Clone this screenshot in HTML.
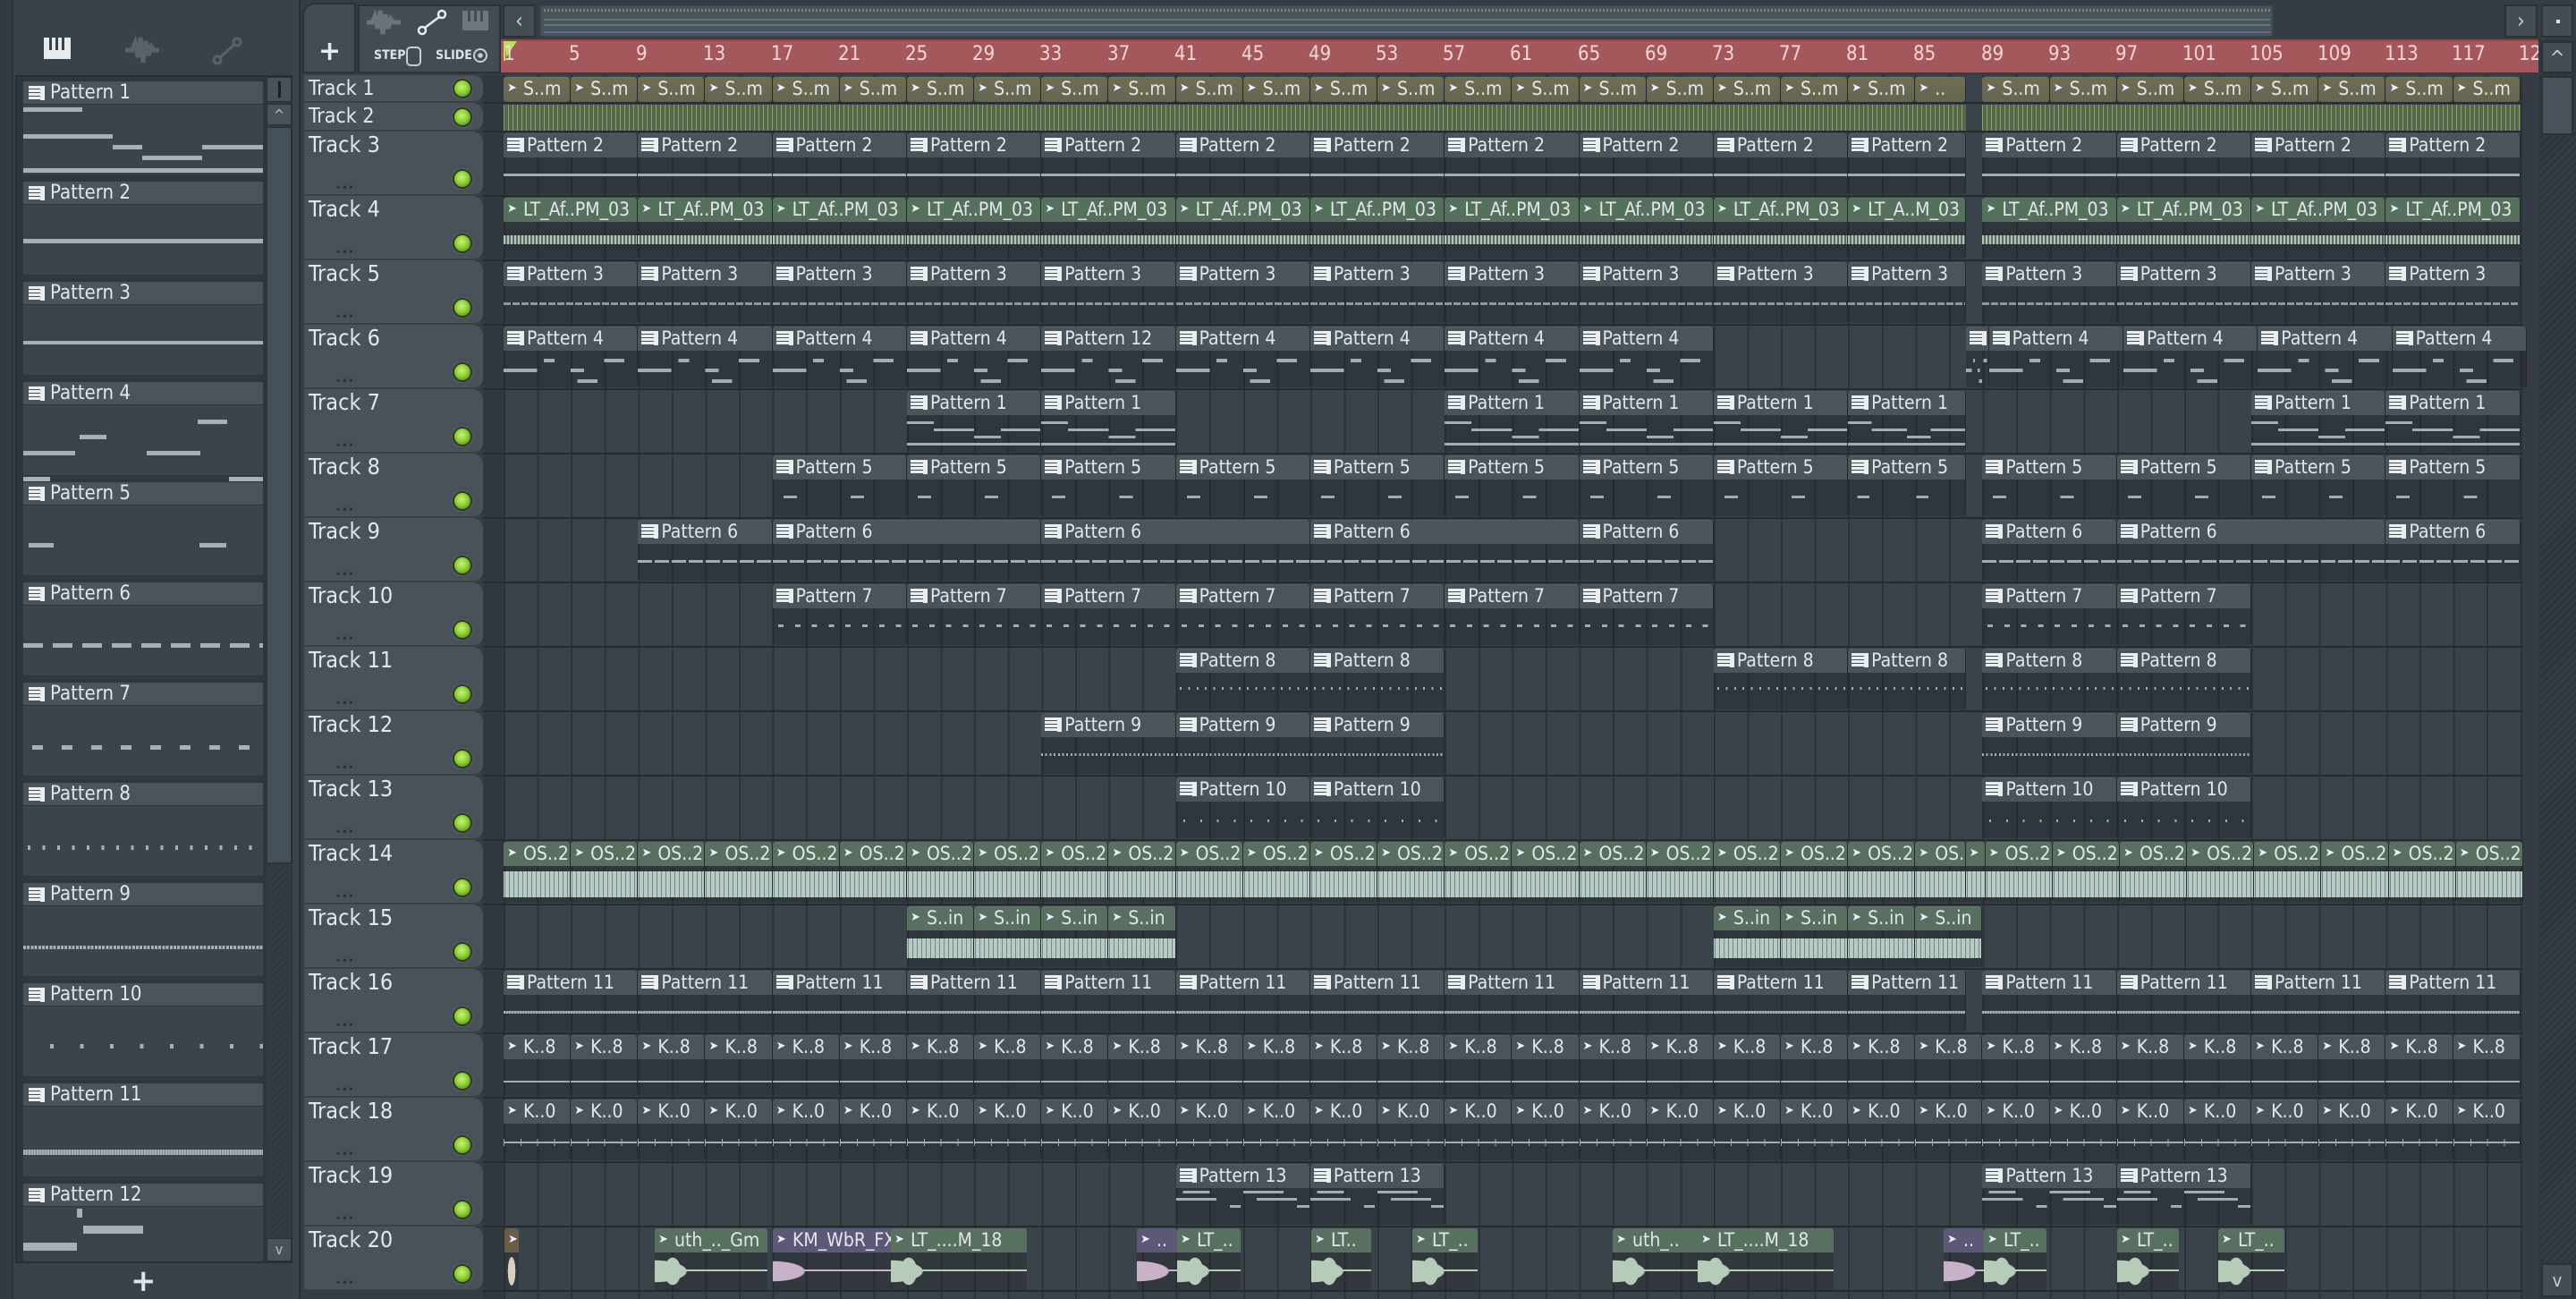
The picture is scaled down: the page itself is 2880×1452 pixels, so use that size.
<!DOCTYPE html>
<html><head><meta charset="utf-8"><style>
*{margin:0;padding:0;box-sizing:border-box}
body{width:2880px;height:1452px;background:#353c43;position:relative;overflow:hidden;font-family:"Liberation Sans Narrow","DejaVu Sans Condensed","Liberation Sans",sans-serif;color:#e2e7ea}
.a{position:absolute}
.lp{left:0;top:0;width:336px;height:1452px;background:#3a4249;border-right:2px solid #2a3035}
.lp .edge{left:0;top:0;width:15px;height:1452px;background:#333a40;border-right:2px solid #2b3136}
.plist{left:17px;top:84px;width:310px;height:1328px;background:#2f363c;border:2px solid #2a2f34;overflow:hidden}
.ph{position:absolute;left:7px;width:268px;height:25px;background:#4b535b;font-size:22px;line-height:25px;padding-left:30px;border-radius:2px}
.ph::before,.c.p::before{content:"";position:absolute;left:6px;top:5px;width:13px;height:16px;background:repeating-linear-gradient(#e8eef0 0 2px,#e8eef0 2px 3px,#4b535b 3px 4px);border-right:5px solid #e8eef0}
.c.p::before{width:14px;height:16px;left:4px;top:5px;border-right-width:5px}
.c.p{padding-left:26px}
.pb{position:absolute;left:7px;width:268px;height:78px;background:#3c444b}
.n{position:absolute;height:5px;background:#a7b0b6}
.th{left:340px;width:200px;background:#4a5259;border-radius:0 12px 12px 0;border-bottom:2px solid #3a4147;font-size:25px;padding-left:5px;line-height:30px}
.led{position:absolute;right:12px;width:22px;height:22px;border-radius:50%;background:radial-gradient(circle at 45% 40%,#c8f270 0,#8fd03a 45%,#5a9a1c 80%);border:2px solid #2b3a20;box-shadow:0 0 0 1px #5a6268}
.dots{position:absolute;left:35px;font-size:18px;color:#2b3136;letter-spacing:1px;font-weight:bold}
.gap{left:540px;top:84px;width:23px;height:1368px;background:#30373d}
.grid{left:563px;top:84px;width:2257px;height:1368px;background:repeating-linear-gradient(90deg,#2c3238 0 2px,transparent 2px 37.58px),#3b434a}
.rs{position:absolute;left:540px;width:2280px;height:2px;background:#262b30}
.tr{position:absolute;left:563px;height:68px;display:flex;width:2257px}
.tr>*{flex:none;height:100%}
.c{position:relative;border-radius:3px;overflow:hidden;white-space:nowrap;font-size:21px;line-height:26px;padding-left:22px;box-shadow:inset -1px 0 #252a2f,inset 0 1px rgba(255,255,255,.06)}
.c.p{background:linear-gradient(#4b535b 0 27px,rgba(28,32,37,.35) 27px)}
.c.au::before,.c.ol::before,.c.gr::before,.c.pu::before{content:"➤";position:absolute;left:4px;top:0;font-family:"DejaVu Sans",sans-serif;font-size:13px;color:#eef}
.ol{background:linear-gradient(#6e6d54,#666550)}
.gr{background:linear-gradient(#56705e 0 27px,rgba(28,32,37,.35) 27px)}
.au{background:linear-gradient(#4b535b 0 27px,rgba(28,32,37,.35) 27px)}
.pu{background:linear-gradient(#5e5878 0 27px,rgba(28,32,37,.35) 27px)}
.b1{width:18.79px}.b3{width:56.37px}.b4{width:75.16px}.b7{width:131.53px}.b8{width:150.32px}.b15{width:281.85px}.b16{width:300.64px}.b24{width:450.96px}.b32{width:601.28px}.b40{width:751.6px}.b87{width:1634.7px}
.e{background:none}
.x3 .c{background:linear-gradient(transparent 45px,#a3acb2 45px 48px,transparent 48px),linear-gradient(#4b535b 0 27px,rgba(28,32,37,.35) 27px)}
.x4 .c{background:repeating-linear-gradient(90deg,transparent 0 2px,rgba(40,48,45,.6) 2px 4px) 0 40px/100% 14px no-repeat,linear-gradient(transparent 42px,#b0c4b6 42px 52px,transparent 52px),linear-gradient(#56705e 0 27px,rgba(28,32,37,.35) 27px)}
.x5 .c{background:repeating-linear-gradient(90deg,#8d979d 0 8px,transparent 8px 10px) 0 45px/100% 3px no-repeat,linear-gradient(#4b535b 0 27px,rgba(28,32,37,.35) 27px)}
.x6 .c{background:linear-gradient(90deg,transparent 0 0%,#a3acb2 0 25%,transparent 25% 50%,#a3acb2 50% 60%,transparent 60%) 0 47px/100% 4px no-repeat,linear-gradient(90deg,transparent 0 30%,#a3acb2 30% 38%,transparent 38% 75%,#a3acb2 75% 90%,transparent 90%) 0 36px/100% 4px no-repeat,linear-gradient(90deg,transparent 0 55%,#a3acb2 55% 70%,transparent 70%) 0 59px/100% 4px no-repeat,linear-gradient(#4b535b 0 27px,rgba(28,32,37,.35) 27px)}
.x7 .c{background:linear-gradient(90deg,#a3acb2 0 20%,transparent 20%) 0 34px/100% 3px no-repeat,linear-gradient(90deg,transparent 0 20%,#a3acb2 20% 50%,transparent 50% 70%,#a3acb2 70%) 0 42px/100% 3px no-repeat,linear-gradient(90deg,transparent 0 50%,#a3acb2 50% 70%,transparent 70%) 0 50px/100% 3px no-repeat,linear-gradient(#a3acb2,#a3acb2) 0 58px/100% 3px no-repeat,linear-gradient(#4b535b 0 27px,rgba(28,32,37,.35) 27px)}
.x8 .c{background:linear-gradient(90deg,transparent 0 8%,#a3acb2 8% 18%,transparent 18% 58%,#a3acb2 58% 68%,transparent 68%) 0 45px/100% 3px no-repeat,linear-gradient(#4b535b 0 27px,rgba(28,32,37,.35) 27px)}
.x9 .c{background:repeating-linear-gradient(90deg,#a3acb2 0 16px,transparent 16px 19px) 0 45px/100% 3px no-repeat,linear-gradient(#4b535b 0 27px,rgba(28,32,37,.35) 27px)}
.x10 .c{background:repeating-linear-gradient(90deg,transparent 0 6px,#a3acb2 6px 12px,transparent 12px 18.8px) 0 45px/100% 3px no-repeat,linear-gradient(#4b535b 0 27px,rgba(28,32,37,.35) 27px)}
.x11 .c{background:repeating-linear-gradient(90deg,transparent 0 4px,#a3acb2 4px 6px,transparent 6px 9.4px) 0 43px/100% 3px no-repeat,linear-gradient(#4b535b 0 27px,rgba(28,32,37,.35) 27px)}
.x12 .c{background:repeating-linear-gradient(90deg,#a3acb2 0 2px,transparent 2px 4.7px) 0 45px/100% 3px no-repeat,linear-gradient(#4b535b 0 27px,rgba(28,32,37,.35) 27px)}
.x13 .c{background:repeating-linear-gradient(90deg,transparent 0 8px,#a3acb2 8px 10px,transparent 10px 18.8px) 0 47px/100% 3px no-repeat,linear-gradient(#4b535b 0 27px,rgba(28,32,37,.35) 27px)}
.x14 .c{background:repeating-linear-gradient(90deg,transparent 0 1px,rgba(40,50,50,.45) 1px 2px,transparent 2px 5px) 0 30px/100% 36px no-repeat,linear-gradient(transparent 33px,#b6cbc5 33px 62px,transparent 62px),linear-gradient(#57705f 0 27px,rgba(28,32,37,.35) 27px)}
.x15 .c{background:repeating-linear-gradient(90deg,transparent 0 1px,rgba(40,50,50,.45) 1px 2px,transparent 2px 5px) 0 30px/100% 38px no-repeat,linear-gradient(transparent 36px,#b6cbc5 36px 58px,transparent 58px),linear-gradient(#57705f 0 27px,rgba(28,32,37,.35) 27px)}
.x16 .c{background:repeating-linear-gradient(90deg,#a3acb2 0 2px,#7f888e 2px 3px) 0 45px/100% 3px no-repeat,linear-gradient(#4b535b 0 27px,rgba(28,32,37,.35) 27px)}
.x17 .c{background:linear-gradient(transparent 51px,#a3acb2 51px 53px,transparent 53px),linear-gradient(#4b535b 0 27px,rgba(28,32,37,.35) 27px)}
.x18 .c{background:repeating-linear-gradient(90deg,#a3acb2 0 1px,transparent 1px 18.8px) 0 44px/100% 8px no-repeat,linear-gradient(transparent 47px,#a3acb2 47px 49px,transparent 49px),linear-gradient(#4b535b 0 27px,rgba(28,32,37,.35) 27px)}
.x19 .c{background:linear-gradient(90deg,transparent 0 5%,#a3acb2 5% 25%,transparent 25% 50%,#a3acb2 50% 80%,transparent 80%) 0 30px/100% 3px no-repeat,linear-gradient(90deg,#a3acb2 0 30%,transparent 30% 60%,#a3acb2 60% 90%,transparent 90%) 0 38px/100% 3px no-repeat,linear-gradient(90deg,transparent 0 40%,#a3acb2 40% 48%,transparent 48% 90%,#a3acb2 90%) 0 46px/100% 3px no-repeat,linear-gradient(#4b535b 0 27px,rgba(28,32,37,.35) 27px)}
.w20{position:absolute;top:1373px;height:70px;border-radius:3px;overflow:hidden;font-size:21px;line-height:26px;padding-left:22px;white-space:nowrap}
.w20::before{content:"➤";position:absolute;left:4px;top:0;font-family:"DejaVu Sans",sans-serif;font-size:13px;color:#eef}
.g20{background:radial-gradient(ellipse 70px 24px at 0px 48px,#b6ccb8 50%,transparent 52%),radial-gradient(ellipse 18px 30px at 20px 48px,#b6ccb8 50%,transparent 52%),linear-gradient(transparent 46px,#b6ccb8 46px 48px,transparent 48px),linear-gradient(#57705f 0 27px,rgba(28,32,37,.3) 27px)}
.p20{background:radial-gradient(ellipse 70px 22px at 0px 48px,#c9b2c9 50%,transparent 52%),linear-gradient(transparent 46px,#c9b2c9 46px 48px,transparent 48px),linear-gradient(#5e5878 0 27px,rgba(28,32,37,.3) 27px)}
.rl{position:absolute;top:48px;font-size:22px;color:#f6d6d6}
</style></head><body>

<!-- LEFT PANEL -->
<div class="a lp">
 <div class="a edge"></div>
 <div class="a" style="left:49px;top:42px;width:30px;height:24px;background:#e6ecee"></div>
 <div class="a" style="left:55px;top:42px;width:3px;height:14px;background:#3a4249"></div>
 <div class="a" style="left:62px;top:42px;width:3px;height:14px;background:#3a4249"></div>
 <div class="a" style="left:69px;top:42px;width:3px;height:14px;background:#3a4249"></div>
 <svg class="a" style="left:138px;top:38px" width="42" height="36"><path d="M2 18 L10 18 L13 10 L16 26 L19 4 L22 32 L25 8 L28 24 L31 14 L34 18 L40 18" stroke="#59626a" stroke-width="5" fill="none"/></svg>
 <svg class="a" style="left:236px;top:40px" width="36" height="34"><circle cx="7" cy="27" r="4" stroke="#59626a" stroke-width="3" fill="none"/><circle cx="29" cy="7" r="4" stroke="#59626a" stroke-width="3" fill="none"/><path d="M10 24 L26 10" stroke="#59626a" stroke-width="3"/></svg>
 <div class="a plist">
  <div class="ph" style="top:5px">Pattern 1</div>
  <div class="pb" style="top:31px">
   <div class="n" style="left:0;top:3px;width:66px"></div><div class="n" style="left:0;top:33px;width:100px"></div><div class="n" style="left:100px;top:45px;width:33px"></div><div class="n" style="left:200px;top:45px;width:68px"></div><div class="n" style="left:133px;top:57px;width:67px"></div><div class="n" style="left:0;top:71px;width:268px"></div></div>
  <div class="ph" style="top:117px">Pattern 2</div>
  <div class="pb" style="top:143px"><div class="n" style="left:0;top:38px;width:268px"></div></div>
  <div class="ph" style="top:229px">Pattern 3</div>
  <div class="pb" style="top:255px"><div class="n" style="left:0;top:40px;width:268px;height:4px"></div></div>
  <div class="ph" style="top:341px">Pattern 4</div>
  <div class="pb" style="top:367px"><div class="n" style="left:195px;top:16px;width:33px"></div><div class="n" style="left:63px;top:33px;width:30px"></div><div class="n" style="left:0;top:51px;width:58px"></div><div class="n" style="left:138px;top:51px;width:60px"></div><div class="n" style="left:0;top:80px;width:30px"></div><div class="n" style="left:230px;top:80px;width:38px"></div></div>
  <div class="ph" style="top:453px">Pattern 5</div>
  <div class="pb" style="top:479px"><div class="n" style="left:6px;top:42px;width:28px"></div><div class="n" style="left:197px;top:42px;width:30px"></div></div>
  <div class="ph" style="top:565px">Pattern 6</div>
  <div class="pb" style="top:591px"><div class="n" style="left:0;top:42px;width:268px;background:repeating-linear-gradient(90deg,#a7b0b6 0 22px,transparent 22px 33px)"></div></div>
  <div class="ph" style="top:677px">Pattern 7</div>
  <div class="pb" style="top:703px"><div class="n" style="left:10px;top:44px;width:258px;background:repeating-linear-gradient(90deg,#a7b0b6 0 12px,transparent 12px 33px)"></div></div>
  <div class="ph" style="top:789px">Pattern 8</div>
  <div class="pb" style="top:815px"><div class="n" style="left:5px;top:44px;width:263px;background:repeating-linear-gradient(90deg,#a7b0b6 0 3px,transparent 3px 16.5px)"></div></div>
  <div class="ph" style="top:901px">Pattern 9</div>
  <div class="pb" style="top:927px"><div class="n" style="left:0;top:44px;width:268px;height:4px;background:repeating-linear-gradient(90deg,#a7b0b6 0 3px,transparent 3px 4.2px)"></div></div>
  <div class="ph" style="top:1013px">Pattern 10</div>
  <div class="pb" style="top:1039px"><div class="n" style="left:30px;top:42px;width:238px;background:repeating-linear-gradient(90deg,#a7b0b6 0 4px,transparent 4px 33.5px)"></div></div>
  <div class="ph" style="top:1125px">Pattern 11</div>
  <div class="pb" style="top:1151px"><div class="n" style="left:0;top:48px;width:268px;height:6px;background:repeating-linear-gradient(90deg,#a7b0b6 0 2px,#7f888e 2px 3px)"></div></div>
  <div class="ph" style="top:1237px">Pattern 12</div>
  <div class="pb" style="top:1263px"><div class="n" style="left:60px;top:2px;width:6px;height:10px"></div><div class="n" style="left:67px;top:21px;width:67px;height:9px"></div><div class="n" style="left:0;top:40px;width:60px;height:9px"></div></div>
 </div>
 <div class="a" style="left:298px;top:86px;width:28px;height:1324px;background:repeating-linear-gradient(135deg,#30373d 0 3px,#343b41 3px 6px)"></div>
 <div class="a" style="left:298px;top:86px;width:28px;height:28px;background:#4a5259;border:1px solid #2a3035"><div class="a" style="left:12px;top:4px;width:3px;height:18px;background:#1c2024"></div></div>
 <div class="a" style="left:298px;top:116px;width:28px;height:24px;background:#4a5259;border:1px solid #2a3035;font-size:16px;text-align:center;line-height:24px;color:#bbb">^</div>
 <div class="a" style="left:298px;top:142px;width:28px;height:823px;background:#465058;border:1px solid #2a3035"></div>
 <div class="a" style="left:298px;top:1384px;width:28px;height:26px;background:#4a5259;border:1px solid #2a3035;font-size:16px;text-align:center;line-height:24px;color:#bbb">v</div>
 <div class="a" style="left:146px;top:1412px;font-size:34px;color:#dfe4e6;font-family:'DejaVu Sans',sans-serif;font-weight:bold">+</div>
</div>

<!-- TOP TOOLBAR -->
<div class="a" style="left:338px;top:3px;width:60px;height:79px;background:#444c53;border-radius:14px 0 0 0;border:2px solid #2b3136"></div>
<div class="a" style="left:356px;top:40px;font-size:30px;font-family:'DejaVu Sans',sans-serif;font-weight:bold;color:#e6ebed">+</div>
<div class="a" style="left:400px;top:5px;width:160px;height:77px;background:#444c53;border:2px solid #2b3136"></div>
<svg class="a" style="left:408px;top:10px" width="44" height="30"><path d="M2 15 L8 15 L11 8 L14 22 L17 2 L20 28 L23 6 L26 22 L29 11 L32 15 L40 15" stroke="#6a737a" stroke-width="5" fill="none"/></svg>
<svg class="a" style="left:466px;top:10px" width="34" height="30"><circle cx="6" cy="24" r="4" stroke="#e6ebed" stroke-width="2.5" fill="none"/><circle cx="28" cy="6" r="4" stroke="#e6ebed" stroke-width="2.5" fill="none"/><path d="M9 21 L25 9" stroke="#e6ebed" stroke-width="2.5"/></svg>
<div class="a" style="left:517px;top:12px;width:29px;height:22px;background:#6d767c"></div>
<div class="a" style="left:523px;top:12px;width:3px;height:12px;background:#444c53"></div><div class="a" style="left:530px;top:12px;width:3px;height:12px;background:#444c53"></div><div class="a" style="left:537px;top:12px;width:3px;height:12px;background:#444c53"></div>
<div class="a" style="left:418px;top:54px;font-size:14px;font-weight:bold;color:#dde2e5">STEP</div>
<div class="a" style="left:454px;top:52px;width:17px;height:22px;border:2px solid #c8ced2;border-radius:5px"></div>
<div class="a" style="left:487px;top:54px;font-size:14px;font-weight:bold;color:#dde2e5">SLIDE</div>
<div class="a" style="left:529px;top:54px;width:16px;height:16px;border:2px solid #c8ced2;border-radius:50%;background:radial-gradient(#c8ced2 30%,transparent 35%)"></div>
<div class="a" style="left:562px;top:5px;width:37px;height:37px;background:#454d54;border:2px solid #2b3136;font-size:24px;line-height:32px;text-align:center;color:#ccd">&lsaquo;</div>
<div class="a" style="left:603px;top:5px;width:1939px;height:37px;background:#49535b;border:2px solid #3a434a"></div>
<div class="a" style="left:608px;top:10px;width:1930px;height:3px;background:repeating-linear-gradient(90deg,#7d8570 0 2px,transparent 2px 4px)"></div>
<div class="a" style="left:608px;top:21px;width:1930px;height:2px;background:#5e7a6c"></div>
<div class="a" style="left:608px;top:27px;width:1930px;height:2px;background:#6b747b"></div>
<div class="a" style="left:608px;top:35px;width:1930px;height:2px;background:#5b6a9a"></div>
<div class="a" style="left:2800px;top:5px;width:37px;height:37px;background:#454d54;border:2px solid #2b3136;font-size:24px;line-height:32px;text-align:center;color:#ccd">&rsaquo;</div>
<div class="a" style="left:2841px;top:5px;width:36px;height:37px;background:#454d54;border:2px solid #2b3136"><div class="a" style="left:15px;top:15px;width:4px;height:4px;background:#dde"></div></div>

<!-- RULER -->
<div class="a" style="left:560px;top:44px;width:2278px;height:37px;background:#a4585c;border-top:2px solid #8c4a4e"></div>
<svg class="a" style="left:562px;top:46px" width="18" height="24"><path d="M2 0 L16 0 L4 18 Z" fill="#b4e25a"/><path d="M2 0 L2 22" stroke="#b4e25a" stroke-width="2"/></svg>
<div class="rl" style="left:563px">1</div><div class="rl" style="left:636px">5</div><div class="rl" style="left:711px">9</div><div class="rl" style="left:786px">13</div><div class="rl" style="left:862px">17</div><div class="rl" style="left:937px">21</div><div class="rl" style="left:1012px">25</div><div class="rl" style="left:1087px">29</div><div class="rl" style="left:1162px">33</div><div class="rl" style="left:1238px">37</div><div class="rl" style="left:1313px">41</div><div class="rl" style="left:1388px">45</div><div class="rl" style="left:1463px">49</div><div class="rl" style="left:1538px">53</div><div class="rl" style="left:1613px">57</div><div class="rl" style="left:1688px">61</div><div class="rl" style="left:1764px">65</div><div class="rl" style="left:1839px">69</div><div class="rl" style="left:1914px">73</div><div class="rl" style="left:1989px">77</div><div class="rl" style="left:2064px">81</div><div class="rl" style="left:2139px">85</div><div class="rl" style="left:2215px">89</div><div class="rl" style="left:2290px">93</div><div class="rl" style="left:2365px">97</div><div class="rl" style="left:2440px">101</div><div class="rl" style="left:2515px">105</div><div class="rl" style="left:2591px">109</div><div class="rl" style="left:2666px">113</div><div class="rl" style="left:2741px">117</div><div class="a" style="left:2816px;top:48px;width:22px;overflow:hidden;font-size:22px;color:#f6d6d6">121</div>

<!-- RIGHT SCROLLBAR -->
<div class="a" style="left:2838px;top:44px;width:42px;height:1408px;background:repeating-linear-gradient(135deg,#2e353b 0 3px,#343b41 3px 6px)"></div>
<div class="a" style="left:2841px;top:46px;width:36px;height:36px;background:#454d54;border:2px solid #2b3136;font-size:22px;text-align:center;line-height:36px;color:#ccd">^</div>
<div class="a" style="left:2841px;top:85px;width:36px;height:66px;background:#49525a;border:2px solid #2b3136"></div>
<div class="a" style="left:2841px;top:1412px;width:36px;height:38px;background:#454d54;border:2px solid #2b3136;font-size:20px;text-align:center;line-height:34px;color:#ccd">v</div>

<!-- TRACK HEADERS -->
<div class="a gap"></div>
<div class="a th" style="top:84px;height:31px;line-height:30px;font-size:23px">Track 1<div class="led" style="top:4px"></div></div>
<div class="a th" style="top:115px;height:32px;line-height:30px;font-size:23px">Track 2<div class="led" style="top:5px"></div></div>
<div class="a th" style="top:147px;height:72px">Track 3<div class="led" style="top:42px"></div><div class="dots" style="top:44px">...</div></div>
<div class="a th" style="top:219px;height:72px">Track 4<div class="led" style="top:42px"></div><div class="dots" style="top:44px">...</div></div>
<div class="a th" style="top:291px;height:72px">Track 5<div class="led" style="top:42px"></div><div class="dots" style="top:44px">...</div></div>
<div class="a th" style="top:363px;height:72px">Track 6<div class="led" style="top:42px"></div><div class="dots" style="top:44px">...</div></div>
<div class="a th" style="top:435px;height:72px">Track 7<div class="led" style="top:42px"></div><div class="dots" style="top:44px">...</div></div>
<div class="a th" style="top:507px;height:72px">Track 8<div class="led" style="top:42px"></div><div class="dots" style="top:44px">...</div></div>
<div class="a th" style="top:579px;height:72px">Track 9<div class="led" style="top:42px"></div><div class="dots" style="top:44px">...</div></div>
<div class="a th" style="top:651px;height:72px">Track 10<div class="led" style="top:42px"></div><div class="dots" style="top:44px">...</div></div>
<div class="a th" style="top:723px;height:72px">Track 11<div class="led" style="top:42px"></div><div class="dots" style="top:44px">...</div></div>
<div class="a th" style="top:795px;height:72px">Track 12<div class="led" style="top:42px"></div><div class="dots" style="top:44px">...</div></div>
<div class="a th" style="top:867px;height:72px">Track 13<div class="led" style="top:42px"></div><div class="dots" style="top:44px">...</div></div>
<div class="a th" style="top:939px;height:72px">Track 14<div class="led" style="top:42px"></div><div class="dots" style="top:44px">...</div></div>
<div class="a th" style="top:1011px;height:72px">Track 15<div class="led" style="top:42px"></div><div class="dots" style="top:44px">...</div></div>
<div class="a th" style="top:1083px;height:72px">Track 16<div class="led" style="top:42px"></div><div class="dots" style="top:44px">...</div></div>
<div class="a th" style="top:1155px;height:72px">Track 17<div class="led" style="top:42px"></div><div class="dots" style="top:44px">...</div></div>
<div class="a th" style="top:1227px;height:72px">Track 18<div class="led" style="top:42px"></div><div class="dots" style="top:44px">...</div></div>
<div class="a th" style="top:1299px;height:72px">Track 19<div class="led" style="top:42px"></div><div class="dots" style="top:44px">...</div></div>
<div class="a th" style="top:1371px;height:72px">Track 20<div class="led" style="top:42px"></div><div class="dots" style="top:44px">...</div></div>

<!-- GRID -->
<div class="a grid"></div>
<div class="rs" style="top:114px"></div><div class="rs" style="top:146px"></div><div class="rs" style="top:218px"></div><div class="rs" style="top:290px"></div><div class="rs" style="top:362px"></div><div class="rs" style="top:434px"></div><div class="rs" style="top:506px"></div><div class="rs" style="top:578px"></div><div class="rs" style="top:650px"></div><div class="rs" style="top:722px"></div><div class="rs" style="top:794px"></div><div class="rs" style="top:866px"></div><div class="rs" style="top:938px"></div><div class="rs" style="top:1010px"></div><div class="rs" style="top:1082px"></div><div class="rs" style="top:1154px"></div><div class="rs" style="top:1226px"></div><div class="rs" style="top:1298px"></div><div class="rs" style="top:1370px"></div><div class="rs" style="top:1442px"></div>

<!-- T1 -->
<div class="tr" style="top:86px;height:28px">
<div class="c ol b4">S..m</div><div class="c ol b4">S..m</div><div class="c ol b4">S..m</div><div class="c ol b4">S..m</div><div class="c ol b4">S..m</div><div class="c ol b4">S..m</div><div class="c ol b4">S..m</div><div class="c ol b4">S..m</div><div class="c ol b4">S..m</div><div class="c ol b4">S..m</div><div class="c ol b4">S..m</div><div class="c ol b4">S..m</div><div class="c ol b4">S..m</div><div class="c ol b4">S..m</div><div class="c ol b4">S..m</div><div class="c ol b4">S..m</div><div class="c ol b4">S..m</div><div class="c ol b4">S..m</div><div class="c ol b4">S..m</div><div class="c ol b4">S..m</div><div class="c ol b4">S..m</div><div class="c ol b3">..</div><i class="e b1"></i><div class="c ol b4">S..m</div><div class="c ol b4">S..m</div><div class="c ol b4">S..m</div><div class="c ol b4">S..m</div><div class="c ol b4">S..m</div><div class="c ol b4">S..m</div><div class="c ol b4">S..m</div><div class="c ol b4">S..m</div>
</div>
<!-- T2 -->
<div class="tr" style="top:117px;height:29px">
<div class="b87" style="background:repeating-linear-gradient(90deg,#8aa070 0 1px,#56684a 1px 5px)"></div><i class="e b1"></i><div class="b32" style="background:repeating-linear-gradient(90deg,#8aa070 0 1px,#56684a 1px 5px)"></div>
</div>
<!-- T3 -->
<div class="tr x3" style="top:149px"><div class="c p b8">Pattern 2</div><div class="c p b8">Pattern 2</div><div class="c p b8">Pattern 2</div><div class="c p b8">Pattern 2</div><div class="c p b8">Pattern 2</div><div class="c p b8">Pattern 2</div><div class="c p b8">Pattern 2</div><div class="c p b8">Pattern 2</div><div class="c p b8">Pattern 2</div><div class="c p b8">Pattern 2</div><div class="c p b7">Pattern 2</div><i class="e b1"></i><div class="c p b8">Pattern 2</div><div class="c p b8">Pattern 2</div><div class="c p b8">Pattern 2</div><div class="c p b8">Pattern 2</div></div>
<!-- T4 -->
<div class="tr x4" style="top:221px"><div class="c gr b8">LT_Af..PM_03</div><div class="c gr b8">LT_Af..PM_03</div><div class="c gr b8">LT_Af..PM_03</div><div class="c gr b8">LT_Af..PM_03</div><div class="c gr b8">LT_Af..PM_03</div><div class="c gr b8">LT_Af..PM_03</div><div class="c gr b8">LT_Af..PM_03</div><div class="c gr b8">LT_Af..PM_03</div><div class="c gr b8">LT_Af..PM_03</div><div class="c gr b8">LT_Af..PM_03</div><div class="c gr b7">LT_A..M_03</div><i class="e b1"></i><div class="c gr b8">LT_Af..PM_03</div><div class="c gr b8">LT_Af..PM_03</div><div class="c gr b8">LT_Af..PM_03</div><div class="c gr b8">LT_Af..PM_03</div></div>
<!-- T5 -->
<div class="tr x5" style="top:293px"><div class="c p b8">Pattern 3</div><div class="c p b8">Pattern 3</div><div class="c p b8">Pattern 3</div><div class="c p b8">Pattern 3</div><div class="c p b8">Pattern 3</div><div class="c p b8">Pattern 3</div><div class="c p b8">Pattern 3</div><div class="c p b8">Pattern 3</div><div class="c p b8">Pattern 3</div><div class="c p b8">Pattern 3</div><div class="c p b7">Pattern 3</div><i class="e b1"></i><div class="c p b8">Pattern 3</div><div class="c p b8">Pattern 3</div><div class="c p b8">Pattern 3</div><div class="c p b8">Pattern 3</div></div>
<!-- T6 -->
<div class="tr x6" style="top:365px"><div class="c p b8">Pattern 4</div><div class="c p b8">Pattern 4</div><div class="c p b8">Pattern 4</div><div class="c p b8">Pattern 4</div><div class="c p b8">Pattern 12</div><div class="c p b8">Pattern 4</div><div class="c p b8">Pattern 4</div><div class="c p b8">Pattern 4</div><div class="c p b8">Pattern 4</div><i class="e b15"></i><div class="c p b1"></div><div class="c p b8">Pattern 4</div><div class="c p b8">Pattern 4</div><div class="c p b8">Pattern 4</div><div class="c p b8">Pattern 4</div></div>
<!-- T7 -->
<div class="tr x7" style="top:437px"><i class="e b24"></i><div class="c p b8">Pattern 1</div><div class="c p b8">Pattern 1</div><i class="e b16"></i><div class="c p b8">Pattern 1</div><div class="c p b8">Pattern 1</div><div class="c p b8">Pattern 1</div><div class="c p b7">Pattern 1</div><i class="e b1"></i><i class="e b16"></i><div class="c p b8">Pattern 1</div><div class="c p b8">Pattern 1</div></div>
<!-- T8 -->
<div class="tr x8" style="top:509px"><i class="e b16"></i><div class="c p b8">Pattern 5</div><div class="c p b8">Pattern 5</div><div class="c p b8">Pattern 5</div><div class="c p b8">Pattern 5</div><div class="c p b8">Pattern 5</div><div class="c p b8">Pattern 5</div><div class="c p b8">Pattern 5</div><div class="c p b8">Pattern 5</div><div class="c p b7">Pattern 5</div><i class="e b1"></i><div class="c p b8">Pattern 5</div><div class="c p b8">Pattern 5</div><div class="c p b8">Pattern 5</div><div class="c p b8">Pattern 5</div></div>
<!-- T9 -->
<div class="tr x9" style="top:581px"><i class="e b8"></i><div class="c p b8">Pattern 6</div><div class="c p b16">Pattern 6</div><div class="c p b16">Pattern 6</div><div class="c p b16">Pattern 6</div><div class="c p b8">Pattern 6</div><i class="e b16"></i><div class="c p b8">Pattern 6</div><div class="c p b16">Pattern 6</div><div class="c p b8">Pattern 6</div></div>
<!-- T10 -->
<div class="tr x10" style="top:653px"><i class="e b16"></i><div class="c p b8">Pattern 7</div><div class="c p b8">Pattern 7</div><div class="c p b8">Pattern 7</div><div class="c p b8">Pattern 7</div><div class="c p b8">Pattern 7</div><div class="c p b8">Pattern 7</div><div class="c p b8">Pattern 7</div><i class="e b16"></i><div class="c p b8">Pattern 7</div><div class="c p b8">Pattern 7</div></div>
<!-- T11 -->
<div class="tr x11" style="top:725px"><i class="e b40"></i><div class="c p b8">Pattern 8</div><div class="c p b8">Pattern 8</div><i class="e b16"></i><div class="c p b8">Pattern 8</div><div class="c p b7">Pattern 8</div><i class="e b1"></i><div class="c p b8">Pattern 8</div><div class="c p b8">Pattern 8</div></div>
<!-- T12 -->
<div class="tr x12" style="top:797px"><i class="e b32"></i><div class="c p b8">Pattern 9</div><div class="c p b8">Pattern 9</div><div class="c p b8">Pattern 9</div><i class="e b32"></i><div class="c p b8">Pattern 9</div><div class="c p b8">Pattern 9</div></div>
<!-- T13 -->
<div class="tr x13" style="top:869px"><i class="e b40"></i><div class="c p b8">Pattern 10</div><div class="c p b8">Pattern 10</div><i class="e b32"></i><div class="c p b8">Pattern 10</div><div class="c p b8">Pattern 10</div></div>
<!-- T14 -->
<div class="tr x14" style="top:941px"><div class="c gr b4">OS..2</div><div class="c gr b4">OS..2</div><div class="c gr b4">OS..2</div><div class="c gr b4">OS..2</div><div class="c gr b4">OS..2</div><div class="c gr b4">OS..2</div><div class="c gr b4">OS..2</div><div class="c gr b4">OS..2</div><div class="c gr b4">OS..2</div><div class="c gr b4">OS..2</div><div class="c gr b4">OS..2</div><div class="c gr b4">OS..2</div><div class="c gr b4">OS..2</div><div class="c gr b4">OS..2</div><div class="c gr b4">OS..2</div><div class="c gr b4">OS..2</div><div class="c gr b4">OS..2</div><div class="c gr b4">OS..2</div><div class="c gr b4">OS..2</div><div class="c gr b4">OS..2</div><div class="c gr b4">OS..2</div><div class="c gr b3">OS..2</div><div class="c gr b1"></div><div class="c gr b4">OS..2</div><div class="c gr b4">OS..2</div><div class="c gr b4">OS..2</div><div class="c gr b4">OS..2</div><div class="c gr b4">OS..2</div><div class="c gr b4">OS..2</div><div class="c gr b4">OS..2</div><div class="c gr b4">OS..2</div></div>
<!-- T15 -->
<div class="tr x15" style="top:1013px"><i class="e b24"></i><div class="c gr b4">S..in</div><div class="c gr b4">S..in</div><div class="c gr b4">S..in</div><div class="c gr b4">S..in</div><i class="e b32"></i><div class="c gr b4">S..in</div><div class="c gr b4">S..in</div><div class="c gr b4">S..in</div><div class="c gr b4">S..in</div></div>
<!-- T16 -->
<div class="tr x16" style="top:1085px"><div class="c p b8">Pattern 11</div><div class="c p b8">Pattern 11</div><div class="c p b8">Pattern 11</div><div class="c p b8">Pattern 11</div><div class="c p b8">Pattern 11</div><div class="c p b8">Pattern 11</div><div class="c p b8">Pattern 11</div><div class="c p b8">Pattern 11</div><div class="c p b8">Pattern 11</div><div class="c p b8">Pattern 11</div><div class="c p b7">Pattern 11</div><i class="e b1"></i><div class="c p b8">Pattern 11</div><div class="c p b8">Pattern 11</div><div class="c p b8">Pattern 11</div><div class="c p b8">Pattern 11</div></div>
<!-- T17 -->
<div class="tr x17" style="top:1157px"><div class="c au b4">K..8</div><div class="c au b4">K..8</div><div class="c au b4">K..8</div><div class="c au b4">K..8</div><div class="c au b4">K..8</div><div class="c au b4">K..8</div><div class="c au b4">K..8</div><div class="c au b4">K..8</div><div class="c au b4">K..8</div><div class="c au b4">K..8</div><div class="c au b4">K..8</div><div class="c au b4">K..8</div><div class="c au b4">K..8</div><div class="c au b4">K..8</div><div class="c au b4">K..8</div><div class="c au b4">K..8</div><div class="c au b4">K..8</div><div class="c au b4">K..8</div><div class="c au b4">K..8</div><div class="c au b4">K..8</div><div class="c au b4">K..8</div><div class="c au b4">K..8</div><div class="c au b4">K..8</div><div class="c au b4">K..8</div><div class="c au b4">K..8</div><div class="c au b4">K..8</div><div class="c au b4">K..8</div><div class="c au b4">K..8</div><div class="c au b4">K..8</div><div class="c au b4">K..8</div></div>
<!-- T18 -->
<div class="tr x18" style="top:1229px"><div class="c au b4">K..0</div><div class="c au b4">K..0</div><div class="c au b4">K..0</div><div class="c au b4">K..0</div><div class="c au b4">K..0</div><div class="c au b4">K..0</div><div class="c au b4">K..0</div><div class="c au b4">K..0</div><div class="c au b4">K..0</div><div class="c au b4">K..0</div><div class="c au b4">K..0</div><div class="c au b4">K..0</div><div class="c au b4">K..0</div><div class="c au b4">K..0</div><div class="c au b4">K..0</div><div class="c au b4">K..0</div><div class="c au b4">K..0</div><div class="c au b4">K..0</div><div class="c au b4">K..0</div><div class="c au b4">K..0</div><div class="c au b4">K..0</div><div class="c au b4">K..0</div><div class="c au b4">K..0</div><div class="c au b4">K..0</div><div class="c au b4">K..0</div><div class="c au b4">K..0</div><div class="c au b4">K..0</div><div class="c au b4">K..0</div><div class="c au b4">K..0</div><div class="c au b4">K..0</div></div>
<!-- T19 -->
<div class="tr x19" style="top:1301px"><i class="e b40"></i><div class="c p b8">Pattern 13</div><div class="c p b8">Pattern 13</div><i class="e b32"></i><div class="c p b8">Pattern 13</div><div class="c p b8">Pattern 13</div></div>
<!-- T20 -->
<div class="w20" style="left:564px;width:16px;padding:0;background:radial-gradient(ellipse 7px 26px at 8px 48px,#d8cfc0 60%,transparent 62%),linear-gradient(#6b5e48 0 27px,rgba(28,32,37,.3) 27px)"></div>
<div class="w20 g20" style="left:732px;width:126px">uth_.._Gm</div>
<div class="w20 p20" style="left:864px;width:134px">KM_WbR_FX</div>
<div class="w20 g20" style="left:996px;width:152px">LT_....M_18</div>
<div class="w20 p20" style="left:1271px;width:45px">..</div>
<div class="w20 g20" style="left:1316px;width:71px">LT_..</div>
<div class="w20 g20" style="left:1466px;width:67px">LT..</div>
<div class="w20 g20" style="left:1579px;width:73px">LT_..</div>
<div class="w20 g20" style="left:1803px;width:97px">uth_..</div>
<div class="w20 g20" style="left:1898px;width:152px">LT_....M_18</div>
<div class="w20 p20" style="left:2173px;width:45px">..</div>
<div class="w20 g20" style="left:2218px;width:70px">LT_..</div>
<div class="w20 g20" style="left:2367px;width:69px">LT_..</div>
<div class="w20 g20" style="left:2480px;width:74px">LT_..</div>
</body></html>
